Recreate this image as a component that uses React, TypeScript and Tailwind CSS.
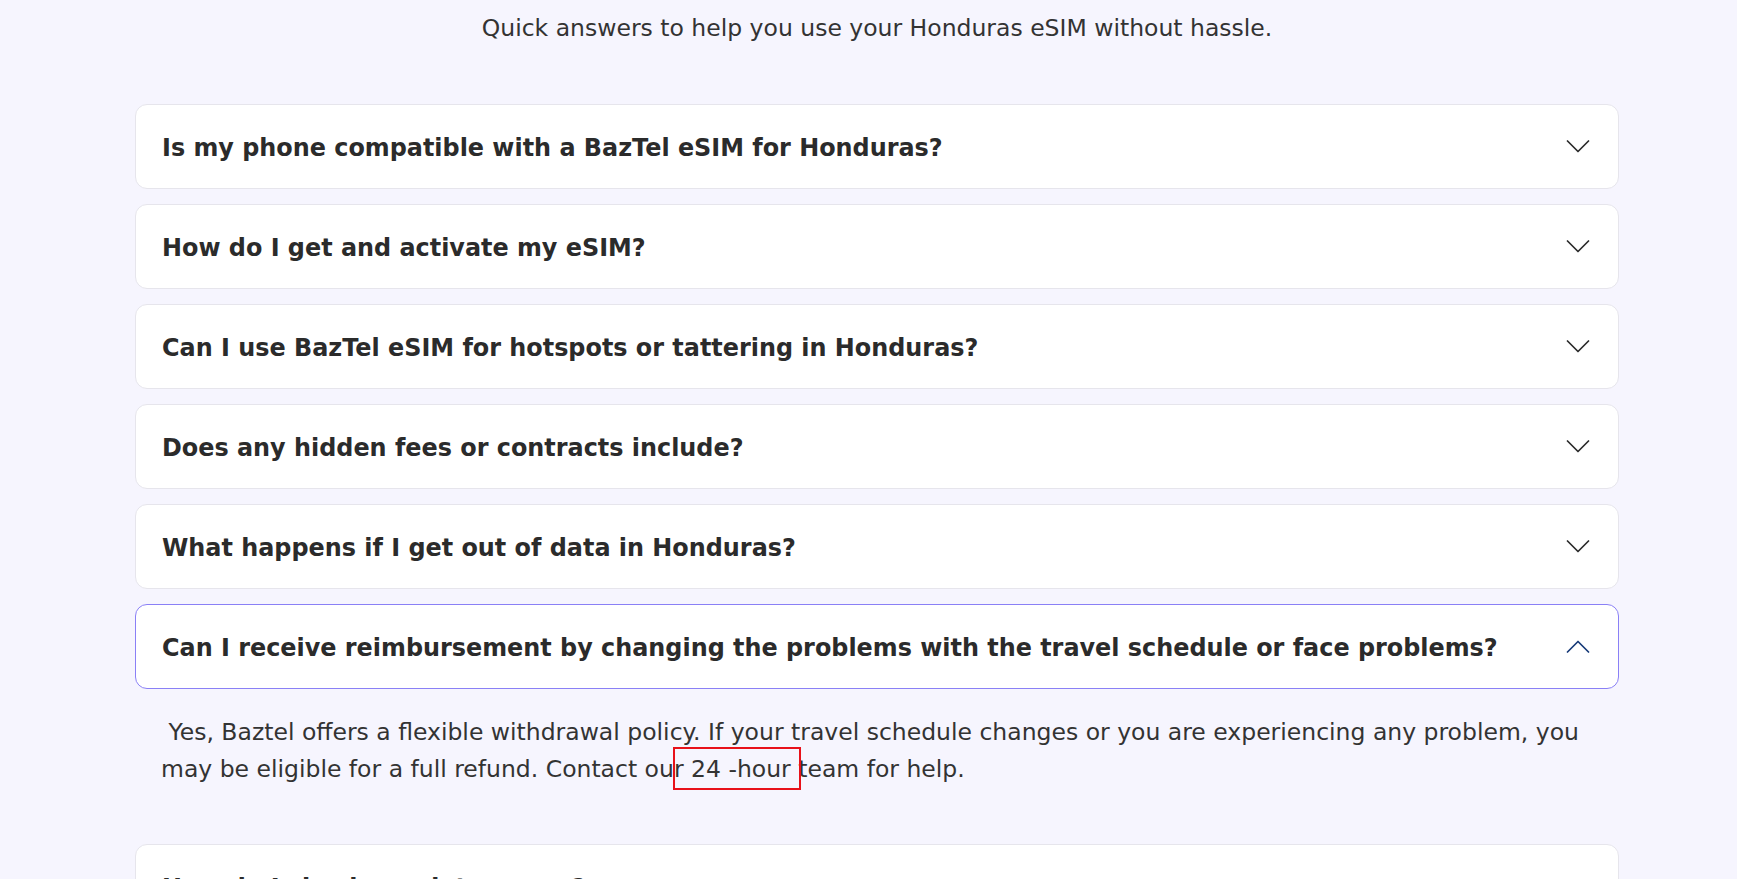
import { useState } from "react";

type Faq = {
  q: string;
  a?: React.ReactNode;
};

const faqs: Faq[] = [
  { q: "Is my phone compatible with a BazTel eSIM for Honduras?" },
  { q: "How do I get and activate my eSIM?" },
  { q: "Can I use BazTel eSIM for hotspots or tattering in Honduras?" },
  { q: "Does any hidden fees or contracts include?" },
  { q: "What happens if I get out of data in Honduras?" },
  {
    q: "Can I receive reimbursement by changing the problems with the travel schedule or face problems?",
    a: (
      <>
        {"\u00a0"}Yes, Baztel offers a flexible withdrawal policy. If your travel schedule changes or you are
        experiencing any problem, you may be eligible for a full refund. Contact our{" "}
        <span className="relative">
          24 -hour
          <span className="pointer-events-none absolute -top-[8px] -bottom-[7px] -left-[18px] -right-[10px] border-2 border-[#e8111a]" />
        </span>{" "}
        team for help.
      </>
    ),
  },
  { q: "How do I check my data usage?" },
];

const Chevron = ({ up }: { up: boolean }) => (
  <svg width="24" height="13" viewBox="0 0 24 13" fill="none" className="shrink-0">
    <polyline
      points={up ? "1.5,12 12,1.5 22.5,12" : "1.5,1 12,11.5 22.5,1"}
      stroke={up ? "#173a78" : "#2b2b2b"}
      strokeWidth="1.7"
      strokeLinecap="round"
      strokeLinejoin="round"
    />
  </svg>
);

export default function App() {
  const [open, setOpen] = useState<number | null>(5);

  return (
    <div
      className="min-h-screen bg-[#f6f5fe] pt-[11px] pl-[17px] text-[#2b2b2b]"
      style={{ fontFamily: "'DejaVu Sans', 'Noto Sans', sans-serif" }}
    >
      <p className="text-center text-[23.5px] leading-[34px] text-[#333]">
        Quick answers to help you use your Honduras eSIM without hassle.
      </p>

      {/* FAQ list */}
      <div className="mx-auto mt-[59px] flex w-[1484px] flex-col gap-[15px]">
        {faqs.map((f, i) => {
          const isOpen = open === i;
          return (
            <div key={i}>
              <button
                onClick={() => setOpen(isOpen ? null : i)}
                className={`flex h-[85px] w-full items-center justify-between rounded-[12px] border bg-white pr-[28px] pl-[26px] text-left ${
                  isOpen ? "border-[#8a80f6]" : "border-[#e6e5ec]"
                }`}
              >
                <span className="pt-[4px] text-[23.9px] font-semibold text-[#2b2b2b]">{f.q}</span>
                <Chevron up={isOpen} />
              </button>
              {isOpen && f.a && (
                <div className="px-[26px] pt-[25px] pb-[41px] text-[23.5px] leading-[37px] text-[#333]">
                  {f.a}
                </div>
              )}
            </div>
          );
        })}
      </div>
    </div>
  );
}
